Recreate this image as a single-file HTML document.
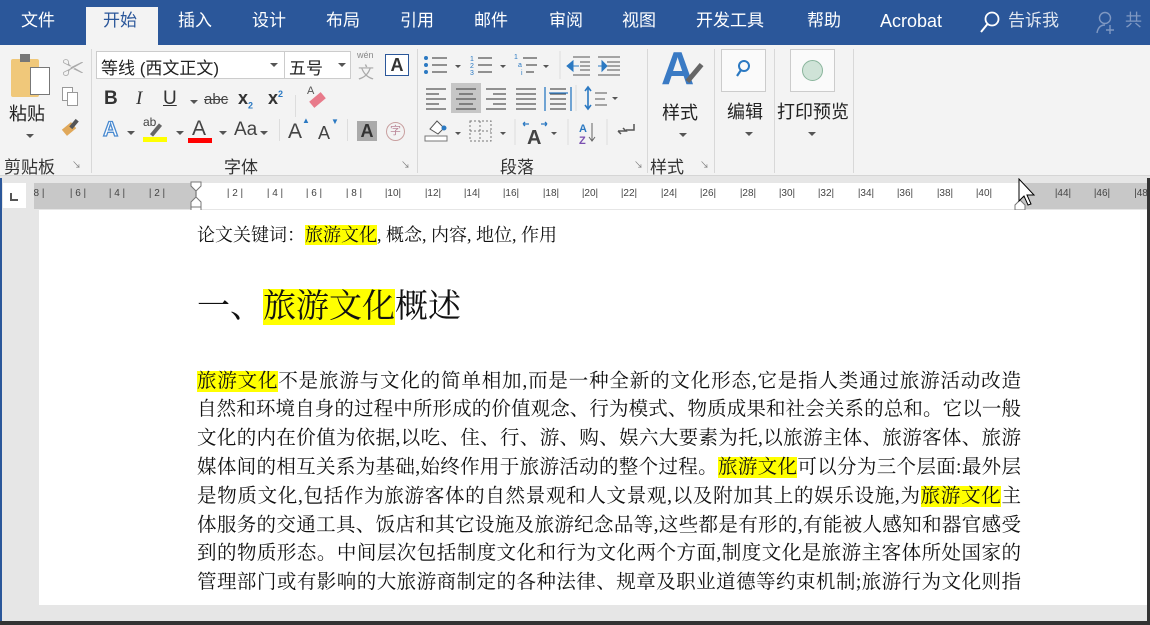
<!DOCTYPE html>
<html><head><meta charset="utf-8"><style>
*{margin:0;padding:0;box-sizing:border-box}
body{width:1150px;height:625px;overflow:hidden;background:#e6e6e6;font-family:"Liberation Sans","Noto Sans CJK SC",sans-serif;position:relative}
.a{position:absolute}
#top{left:0;top:0;width:1150px;height:45px;background:#2b579a}
.tab{position:absolute;top:8px;color:#fff;font-size:17px;line-height:26px;white-space:nowrap}
#rib{left:0;top:45px;width:1150px;height:131px;background:#f3f3f3;border-bottom:1px solid #d5d5d5}
.sep{position:absolute;top:4px;width:1px;height:124px;background:#d8d8d8}
.gl{position:absolute;top:108px;font-size:17px;color:#333;white-space:nowrap}
.t{position:absolute;color:#444;white-space:nowrap}
.dd{position:absolute;width:0;height:0;border-left:4px solid transparent;border-right:4px solid transparent;border-top:4px solid #555}
.doc{font-family:"Liberation Serif","Noto Serif CJK SC",serif;color:#111}
.bl{position:absolute;left:197px;width:824px;font-size:19.5px;text-align:justify;text-align-last:justify;white-space:nowrap;height:24px;line-height:24px}
.hl{background:#ffff00}
.rn{position:absolute;top:188px;font-size:10px;color:#444;width:30px;margin-left:-15px;text-align:center;white-space:nowrap}
</style></head><body>
<div id="top" class="a">
<div class="a" style="left:86px;top:7px;width:72px;height:38px;background:#f3f3f3"></div>
<span class="tab" style="left:21px">文件</span>
<span class="tab" style="left:103px;color:#2b579a">开始</span>
<span class="tab" style="left:178px">插入</span>
<span class="tab" style="left:252px">设计</span>
<span class="tab" style="left:326px">布局</span>
<span class="tab" style="left:400px">引用</span>
<span class="tab" style="left:474px">邮件</span>
<span class="tab" style="left:549px">审阅</span>
<span class="tab" style="left:622px">视图</span>
<span class="tab" style="left:696px">开发工具</span>
<span class="tab" style="left:807px">帮助</span>
<span class="tab" style="left:880px;font-size:18px">Acrobat</span>
<svg class="a" style="left:979px;top:10px" width="24" height="24"><circle cx="13" cy="9" r="6.5" fill="none" stroke="#fff" stroke-width="1.8"/><line x1="8.5" y1="14" x2="2" y2="22" stroke="#fff" stroke-width="2"/></svg>
<span class="tab" style="left:1008px;color:#dfe6f0">告诉我</span>
<svg class="a" style="left:1095px;top:11px" width="22" height="24"><circle cx="10" cy="7" r="5.5" fill="none" stroke="#7f98c2" stroke-width="1.4"/><path d="M2 22c1-6 4-8 8-8M15 14v9M11 19h8" fill="none" stroke="#7f98c2" stroke-width="1.4"/></svg>
<span class="tab" style="left:1125px;color:#7f98c2">共</span>
</div>
<div id="rib" class="a">
<!-- clipboard -->
<div class="a" style="left:11px;top:14px;width:28px;height:38px;background:#f0c87a;border-radius:2px"></div>
<div class="a" style="left:20px;top:9px;width:10px;height:8px;background:#777"></div>
<div class="a" style="left:30px;top:22px;width:20px;height:28px;background:#fff;border:1px solid #777"></div>
<span class="t" style="left:9px;top:55px;font-size:18px;color:#222">粘贴</span>
<div class="dd" style="left:26px;top:89px"></div>
<span class="t" style="left:62px;top:6px;font-size:22px;color:#aaa">✂</span>
<div class="a" style="left:62px;top:42px;width:11px;height:14px;border:1px solid #999;background:#fff"></div>
<div class="a" style="left:67px;top:47px;width:11px;height:14px;border:1px solid #999;background:#fff"></div>
<div class="a" style="left:63px;top:80px;width:12px;height:8px;background:#e0a85a;transform:rotate(-40deg)"></div>
<div class="a" style="left:72px;top:74px;width:4px;height:10px;background:#555;transform:rotate(40deg)"></div>
<span class="gl" style="left:4px">剪贴板</span>
<span class="t" style="left:72px;top:113px;font-size:9px;color:#777">↘</span>
<div class="sep" style="left:91px"></div>
<!-- font -->
<div class="a" style="left:96px;top:6px;width:189px;height:28px;background:#fff;border:1px solid #ccc"></div>
<span class="t" style="left:101px;top:9px;font-size:17px;color:#222">等线 (西文正文)</span>
<div class="dd" style="left:270px;top:18px"></div>
<div class="a" style="left:284px;top:6px;width:67px;height:28px;background:#fff;border:1px solid #ccc"></div>
<span class="t" style="left:289px;top:9px;font-size:17px;color:#222">五号</span>
<div class="dd" style="left:338px;top:18px"></div>
<span class="t" style="left:357px;top:5px;font-size:9px;color:#888">wén</span>
<span class="t" style="left:358px;top:14px;font-size:16px;color:#aaa">文</span>
<div class="a" style="left:385px;top:9px;width:24px;height:22px;border:1px solid #2b579a;background:#fff;font-size:18px;font-weight:bold;color:#333;text-align:center;line-height:20px">A</div>
<span class="t" style="left:104px;top:43px;font-size:19px;font-weight:bold;color:#333">B</span>
<span class="t" style="left:136px;top:43px;font-size:19px;font-style:italic;font-family:'Liberation Serif',serif;color:#333">I</span>
<span class="t" style="left:163px;top:43px;font-size:19px;text-decoration:underline;color:#333">U</span>
<div class="dd" style="left:190px;top:55px"></div>
<span class="t" style="left:204px;top:46px;font-size:15px;text-decoration:line-through;color:#444">abc</span>
<span class="t" style="left:238px;top:43px;font-size:18px;font-weight:bold;color:#333">x<sub style="font-size:9px;color:#2b79c2">2</sub></span>
<span class="t" style="left:268px;top:43px;font-size:18px;font-weight:bold;color:#333">x<sup style="font-size:9px;color:#2b79c2">2</sup></span>
<div class="a" style="left:295px;top:50px;width:1px;height:22px;background:#ddd"></div>
<div class="a" style="left:310px;top:51px;width:15px;height:8px;background:#e87a8a;transform:rotate(-40deg)"></div>
<span class="t" style="left:307px;top:40px;font-size:11px;color:#555">A</span>
<span class="t" style="left:103px;top:73px;font-size:21px;color:#fff;-webkit-text-stroke:1.3px #4a8ad0;font-weight:bold">A</span>
<div class="dd" style="left:127px;top:86px"></div>
<span class="t" style="left:143px;top:70px;font-size:12px;color:#444">ab</span>
<div class="a" style="left:143px;top:92px;width:24px;height:5px;background:#ffff00"></div>
<div class="a" style="left:154px;top:78px;width:4px;height:14px;background:#666;transform:rotate(40deg)"></div>
<div class="dd" style="left:176px;top:86px"></div>
<span class="t" style="left:192px;top:72px;font-size:21px;color:#444">A</span>
<div class="a" style="left:188px;top:93px;width:24px;height:5px;background:#f00"></div>
<div class="dd" style="left:219px;top:86px"></div>
<span class="t" style="left:234px;top:74px;font-size:19px;color:#444">Aa</span>
<div class="dd" style="left:260px;top:86px"></div>
<div class="a" style="left:279px;top:74px;width:1px;height:22px;background:#ddd"></div>
<span class="t" style="left:288px;top:75px;font-size:21px;color:#444">A</span><span class="t" style="left:302px;top:71px;font-size:8px;color:#2b79c2">▲</span>
<span class="t" style="left:318px;top:78px;font-size:18px;color:#444">A</span><span class="t" style="left:331px;top:72px;font-size:8px;color:#2b79c2">▼</span>
<div class="a" style="left:347px;top:74px;width:1px;height:22px;background:#ddd"></div>
<div class="a" style="left:357px;top:76px;width:20px;height:20px;background:#aaa;color:#333;font-size:18px;font-weight:bold;text-align:center;line-height:20px">A</div>
<div class="a" style="left:386px;top:77px;width:19px;height:19px;border:1px solid #c9a0a0;border-radius:50%;font-size:11px;color:#b89;text-align:center;line-height:17px">字</div>
<span class="gl" style="left:224px">字体</span>
<span class="t" style="left:401px;top:113px;font-size:9px;color:#777">↘</span>
<div class="sep" style="left:417px"></div>
<!-- paragraph -->
<svg class="a" style="left:415px;top:0" width="230" height="105">
<g fill="#2b79c2"><circle cx="11" cy="13" r="2"/><circle cx="11" cy="20" r="2"/><circle cx="11" cy="27" r="2"/></g>
<g stroke="#555" stroke-width="1.2"><path d="M17 13h15M17 20h15M17 27h15M63 13h14M63 20h14M63 27h14M108 13h14M111 20h11M111 27h8"/></g>
<text x="55" y="16" font-size="7" fill="#2b79c2">1</text><text x="55" y="23" font-size="7" fill="#2b79c2">2</text><text x="55" y="30" font-size="7" fill="#2b79c2">3</text>
<text x="99" y="14" font-size="7" fill="#2b79c2">1</text><text x="103" y="22" font-size="7" fill="#2b79c2">a</text><text x="106" y="30" font-size="7" fill="#2b79c2">i</text>
<path d="M40 20l3 3 3-3zM85 20l3 3 3-3zM128 20l3 3 3-3z" fill="#555"/>
<path d="M145 6v28" stroke="#ddd"/>
<path d="M158 12h17M165 17h10M165 21h10M165 25h10M158 30h17M183 12h22M192 17h13M192 21h13M192 25h13M183 30h22" stroke="#555"/>
<path d="M152 21l6-5v10zM158 21h6M183 21h5M192 21l-5-5v10z" fill="#2b79c2" stroke="#2b79c2"/>
<rect x="36" y="38" width="30" height="30" fill="#c6c6c6"/>
<path d="M11 44h20M11 49h13M11 54h20M11 59h13M11 64h20M41 44h20M44 49h14M41 54h20M44 59h14M41 64h20M71 44h20M78 49h13M71 54h20M78 59h13M71 64h20M101 44h20M101 49h20M101 54h20M101 59h20M101 64h20M135 44h16M135 49h16M135 54h16M135 59h16M135 64h16" stroke="#555" stroke-width="1.2"/>
<path d="M130 42v24M156 42v24M134 48h19" stroke="#2b79c2" stroke-width="1.3"/>
<path d="M161 40v26" stroke="#ddd"/>
<path d="M173 43v20M170 46l3-4 3 4M170 60l3 4 3-4" stroke="#2b79c2" stroke-width="1.6" fill="none"/>
<path d="M180 48h12M180 54h10M180 60h12" stroke="#555"/><path d="M197 52l3 3 3-3z" fill="#555"/>
<rect x="10" y="91" width="22" height="5" fill="#fff" stroke="#777"/>
<path d="M15 84l7-8 7 7-6 6z" fill="#fff" stroke="#555"/><circle cx="29" cy="83" r="2.5" fill="#2b79c2"/>
<path d="M40 87l3 3 3-3zM85 87l3 3 3-3zM136 87l3 3 3-3z" fill="#555"/>
<rect x="55" y="76" width="21" height="20" fill="none" stroke="#777" stroke-dasharray="2 2"/><path d="M65 76v20M55 86h21" stroke="#777" stroke-dasharray="2 2"/>
<path d="M100 74v26M153 74v26M192 74v26" stroke="#ddd"/>
<text x="112" y="99" font-size="20" fill="#444" font-weight="bold" font-family="Liberation Sans">A</text>
<path d="M108 79h6M126 79h6M108 79l2-2M108 79l2 2M132 79l-2-2M132 79l-2 2" stroke="#2b79c2" stroke-width="1.3"/>
<text x="164" y="87" font-size="11" fill="#2b79c2" font-weight="bold">A</text><text x="164" y="99" font-size="11" fill="#7a4fb0" font-weight="bold">Z</text>
<path d="M177 78v18M174 92l3 4 3-4" stroke="#666" fill="none"/>
<path d="M203 86h8l-3-3M203 86l3 3M219 79v6h-8" stroke="#555" stroke-width="1.5" fill="none"/>
</svg>
<span class="gl" style="left:500px">段落</span>
<span class="t" style="left:634px;top:113px;font-size:9px;color:#777">↘</span>
<div class="sep" style="left:647px"></div>
<!-- styles -->
<span class="t" style="left:661px;top:-4px;font-size:46px;color:#3a7ac4;font-weight:bold;font-family:'Liberation Sans',sans-serif">A</span>
<div class="a" style="left:692px;top:17px;width:5px;height:22px;background:#666;transform:rotate(40deg)"></div>
<span class="t" style="left:662px;top:54px;font-size:18px;color:#222">样式</span>
<div class="dd" style="left:679px;top:88px"></div>
<span class="gl" style="left:650px">样式</span>
<span class="t" style="left:700px;top:113px;font-size:9px;color:#777">↘</span>
<div class="sep" style="left:714px"></div>
<div class="a" style="left:721px;top:4px;width:45px;height:43px;background:#fafafa;border:1px solid #ccc"></div>
<svg class="a" style="left:732px;top:13px" width="22" height="22"><circle cx="12" cy="8" r="5" fill="none" stroke="#2b79c2" stroke-width="2"/><line x1="9" y1="12" x2="5" y2="18" stroke="#2b79c2" stroke-width="2.2"/></svg>
<span class="t" style="left:727px;top:53px;font-size:18px;color:#222">编辑</span>
<div class="dd" style="left:745px;top:87px"></div>
<div class="sep" style="left:774px"></div>
<div class="a" style="left:790px;top:4px;width:45px;height:43px;background:#fafafa;border:1px solid #ccc"></div>
<div class="a" style="left:802px;top:15px;width:21px;height:21px;border-radius:50%;background:#cfe3d7;border:1px solid #8ab59c"></div>
<span class="t" style="left:777px;top:53px;font-size:18px;color:#222">打印预览</span>
<div class="dd" style="left:808px;top:87px"></div>
<div class="sep" style="left:853px"></div>
</div>
<!-- ruler -->
<div class="a" style="left:0;top:177px;width:1150px;height:33px;background:#e6e6e6"></div>
<div class="a" style="left:3px;top:183px;width:23px;height:25px;background:#fff"></div>
<div class="a" style="left:10px;top:193px;width:8px;height:8px;border-left:2px solid #555;border-bottom:2px solid #555"></div>
<div class="a" style="left:34px;top:183px;width:1116px;height:26px;background:#fff"></div>
<div class="a" style="left:34px;top:183px;width:162px;height:26px;background:#c8c8c8"></div>
<div class="a" style="left:1020px;top:183px;width:130px;height:26px;background:#c8c8c8"></div>
<div class="rn" style="left:39px">8 |</div><div class="rn" style="left:78px">| 6 |</div><div class="rn" style="left:117px">| 4 |</div><div class="rn" style="left:157px">| 2 |</div><div class="rn" style="left:196px">|</div>
<div class="rn" style="left:235px">| 2 |</div><div class="rn" style="left:275px">| 4 |</div><div class="rn" style="left:314px">| 6 |</div><div class="rn" style="left:354px">| 8 |</div><div class="rn" style="left:393px">|10|</div><div class="rn" style="left:433px">|12|</div><div class="rn" style="left:472px">|14|</div><div class="rn" style="left:511px">|16|</div><div class="rn" style="left:551px">|18|</div><div class="rn" style="left:590px">|20|</div><div class="rn" style="left:629px">|22|</div><div class="rn" style="left:669px">|24|</div><div class="rn" style="left:708px">|26|</div><div class="rn" style="left:748px">|28|</div><div class="rn" style="left:787px">|30|</div><div class="rn" style="left:826px">|32|</div><div class="rn" style="left:866px">|34|</div><div class="rn" style="left:905px">|36|</div><div class="rn" style="left:945px">|38|</div><div class="rn" style="left:984px">|40|</div><div class="rn" style="left:1023px">|</div><div class="rn" style="left:1063px">|44|</div><div class="rn" style="left:1102px">|46|</div><div class="rn" style="left:1141px">|48</div>
<div class="a" style="left:190px;top:181px;width:12px;height:35px;"><svg width="12" height="35"><path d="M1 1h10v4l-5 5-5-5zM1 21l5-5 5 5v5H1zM1 26h10v8H1z" fill="#fff" stroke="#777"/></svg></div>
<div class="a" style="left:1014px;top:198px;width:12px;height:12px"><svg width="12" height="12"><path d="M1 11V6l5-5 5 5v5z" fill="#fff" stroke="#777"/></svg></div>
<svg class="a" style="left:1017px;top:178px" width="20" height="30"><path d="M2 1v22l5-5 4 9 3-1-4-9h7z" fill="#fff" stroke="#000"/></svg>
<!-- document -->
<div class="a" style="left:0;top:178px;width:2px;height:447px;background:#2b579a"></div>
<div class="a" style="left:39px;top:210px;width:1111px;height:395px;background:#fff"></div>
<div class="a" style="left:0;top:621px;width:1150px;height:4px;background:#333"></div>
<div class="a" style="left:1147px;top:178px;width:3px;height:447px;background:#333"></div>
<div class="doc">
<div class="a" style="left:197px;top:223px;font-size:18px;line-height:24px;white-space:nowrap">论文关键词：<span class="hl">旅游文化</span>, 概念, 内容, 地位, 作用</div>
<div class="a" style="left:197px;top:285px;font-size:33px;line-height:44px;white-space:nowrap">一、<span class="hl">旅游文化</span>概述</div>
<div class="bl" style="top:370px"><span class="hl">旅游文化</span>不是旅游与文化的简单相加,而是一种全新的文化形态,它是指人类通过旅游活动改造</div>
<div class="bl" style="top:398px">自然和环境自身的过程中所形成的价值观念、行为模式、物质成果和社会关系的总和。它以一般</div>
<div class="bl" style="top:427px">文化的内在价值为依据,以吃、住、行、游、购、娱六大要素为托,以旅游主体、旅游客体、旅游</div>
<div class="bl" style="top:456px">媒体间的相互关系为基础,始终作用于旅游活动的整个过程。<span class="hl">旅游文化</span>可以分为三个层面:最外层</div>
<div class="bl" style="top:485px">是物质文化,包括作为旅游客体的自然景观和人文景观,以及附加其上的娱乐设施,为<span class="hl">旅游文化</span>主</div>
<div class="bl" style="top:514px">体服务的交通工具、饭店和其它设施及旅游纪念品等,这些都是有形的,有能被人感知和器官感受</div>
<div class="bl" style="top:542px">到的物质形态。中间层次包括制度文化和行为文化两个方面,制度文化是旅游主客体所处国家的</div>
<div class="bl" style="top:571px">管理部门或有影响的大旅游商制定的各种法律、规章及职业道德等约束机制;旅游行为文化则指</div>
</div>
</body></html>
